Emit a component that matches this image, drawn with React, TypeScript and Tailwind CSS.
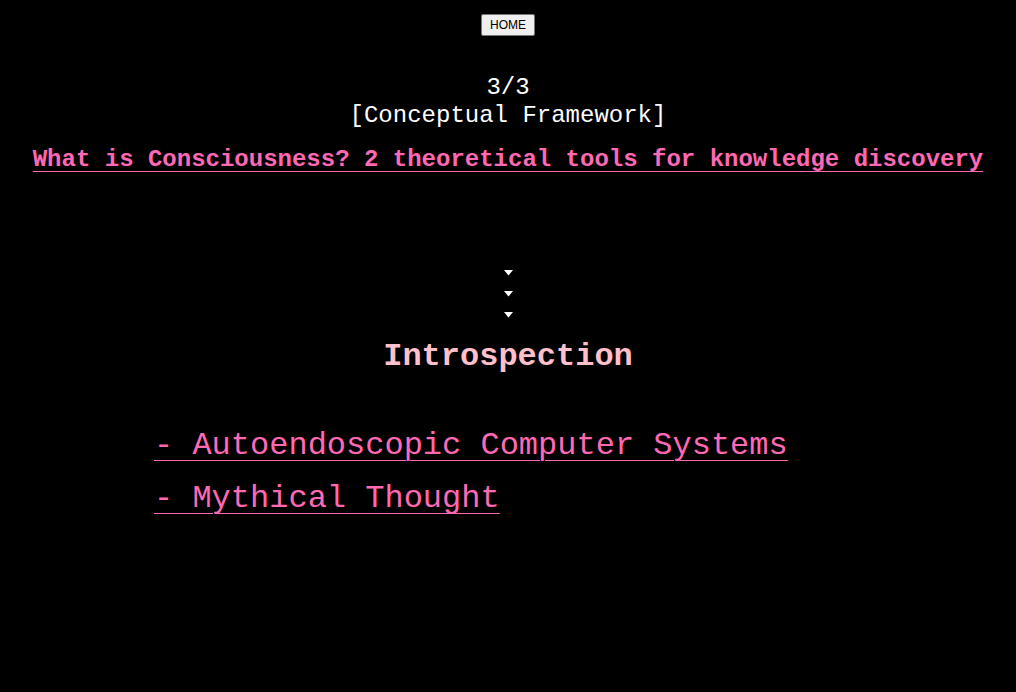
const Arrow = () => (
	<svg width="9" height="6" viewBox="0 0 9 6" className="block">
		<path d="M0 0 H9 L4.5 5.5 Z" fill="#ffffff" />
	</svg>
);

const App = () => {
	const links: Array<string> = ["- Autoendoscopic Computer Systems", "- Mythical Thought"];

	return (
		<div className="min-h-screen bg-black text-white font-['Liberation_Mono',monospace] flex flex-col items-center">
			<button className="mt-[14px] h-[22px] px-[8px] text-[12px] font-['Liberation_Sans',sans-serif] bg-[#efefef] border border-[#767676] rounded-[2px] text-black">
				HOME
			</button>
			<div className="mt-[38px] text-[24px] leading-[28px] text-center">
				<p>3/3</p>
				<p>[Conceptual Framework]</p>
			</div>
			<a
				href="#"
				className="mt-[16px] text-[24px] leading-[28px] font-bold text-[#ff69b4] underline underline-offset-[5px] decoration-1"
			>
				What is Consciousness? 2 theoretical tools for knowledge discovery
			</a>
			<div className="mt-[96px] flex flex-col items-center gap-[15px]">
				<Arrow />
				<Arrow />
				<Arrow />
			</div>
			<h2 className="mt-[15px] text-[32px] font-bold text-[#ffc0cb]">Introspection</h2>
			<ul className="self-start ml-[154px] mt-[46px] flex flex-col gap-[16px]">
				{links.map((link) => (
					<li key={link}>
						<a
							href="#"
							className="text-[32px] leading-[37px] text-[#ff69b4] underline underline-offset-[6px] decoration-1 whitespace-pre"
						>
							{link}
						</a>
					</li>
				))}
			</ul>
		</div>
	);
};

export default App;
